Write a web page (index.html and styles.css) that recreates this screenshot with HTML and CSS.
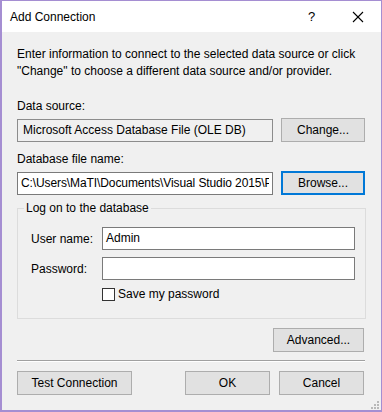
FILE: index.html
```html
<!DOCTYPE html>
<html lang="en">
<head>
  <meta charset="UTF-8">
  <title>Add Connection</title>
  <link rel="stylesheet" href="styles.css">
</head>
<body>
  <div class="window">
    <div class="titlebar">
      <span class="title">Add Connection</span>
      <span class="help">?</span>
      <span class="close">
        <svg width="12" height="12" viewBox="0 0 12 12">
          <line x1="1" y1="1" x2="11" y2="11" stroke="#000" stroke-width="1.1"></line>
          <line x1="11" y1="1" x2="1" y2="11" stroke="#000" stroke-width="1.1"></line>
        </svg>
      </span>
    </div>

    <div class="content">
      <p class="intro">Enter information to connect to the selected data source or click "Change" to choose a different data source and/or provider.</p>

      <label class="field-label">Data source:</label>
      <div class="row">
        <div class="textbox readonly">Microsoft Access Database File (OLE DB)</div>
        <button class="button">Change...</button>
      </div>

      <label class="field-label">Database file name:</label>
      <div class="row">
        <div class="textbox"><span class="path">C:\Users\MaTI\Documents\Visual Studio 2015\P</span></div>
        <button class="button focused">Browse...</button>
      </div>

      <fieldset class="group">
        <legend>Log on to the database</legend>
        <div class="login-row">
          <span class="login-label">User name:</span>
          <div class="textbox wide">Admin</div>
        </div>
        <div class="login-row">
          <span class="login-label">Password:</span>
          <div class="textbox wide"></div>
        </div>
        <div class="check-row">
          <span class="checkbox"></span>
          <span>Save my password</span>
        </div>
      </fieldset>

      <div class="advanced-row">
        <button class="button advanced">Advanced...</button>
      </div>

      <div class="separator"></div>

      <div class="footer">
        <button class="button test">Test Connection</button>
        <div class="footer-right">
          <button class="button">OK</button>
          <button class="button">Cancel</button>
        </div>
      </div>
    </div>

    <div class="grip">
      <i></i><i></i><i></i><i></i><i></i><i></i>
    </div>
  </div>
</body>
</html>
```

FILE: styles.css
```css
body {
  margin: 0;
  padding: 0;
  font-family: 'Liberation Sans', Arial, sans-serif;
  font-size: 12px;
  color: #000;
  background-color: #3b3b3b;
}
.window {
  position: relative;
  box-sizing: border-box;
  width: 382px;
  height: 412px;
  border: 1px solid #a58ed2;
  border-left-width: 2px;
  border-bottom-width: 2px;
  background-color: #f0f0f0;
  overflow: hidden;
}
.titlebar {
  display: flex;
  align-items: center;
  height: 31px;
  background-color: #fff;
  padding-left: 8px;
}
.title {
  flex: 1;
  font-size: 12px;
}
.help {
  width: 24px;
  font-size: 13px;
  margin-right: 20px;
}
.close {
  display: flex;
  align-items: center;
  margin-right: 17px;
}
.content {
  padding: 14px 16px 0 15px;
}
.intro {
  margin: 0 0 18px 0;
  line-height: 17px;
  padding-right: 6px;
}
.field-label {
  display: block;
  line-height: 16px;
  margin-bottom: 4px;
}
.row {
  display: flex;
  align-items: center;
  justify-content: space-between;
  margin-bottom: 9px;
}
.textbox {
  box-sizing: border-box;
  width: 256px;
  height: 23px;
  line-height: 21px;
  padding: 0 3px;
  border: 1px solid #7a7a7a;
  background-color: #fff;
  white-space: nowrap;
  overflow: hidden;
}
.path {
  display: block;
  overflow: hidden;
  letter-spacing: -0.1px;
}
.textbox.readonly {
  background-color: #f0f0f0;
  border-color: #8c8c8c;
  padding-left: 5px;
}
.button {
  box-sizing: border-box;
  width: 84px;
  height: 24px;
  font-family: inherit;
  font-size: 12px;
  color: #000;
  background-color: #e1e1e1;
  border: 1px solid #adadad;
  padding: 0;
}
.button.focused {
  border: 2px solid #0078d7;
}
.group {
  margin: -3px 0 0 0;
  padding: 11px 10px 14px 6px;
  border: 1px solid #dcdcdc;
  height: 118px;
  box-sizing: border-box;
}
.group legend {
  padding: 0 2px;
  margin-left: 0;
}
.login-row {
  display: flex;
  align-items: center;
  margin-bottom: 7px;
  padding-left: 7px;
}
.login-row:first-of-type {
  margin-top: 1px;
}
.login-label {
  width: 71px;
}
.textbox.wide {
  width: 253px;
  height: 23px;
}
.check-row {
  display: flex;
  align-items: center;
  gap: 3px;
  margin-left: 78px;
  margin-top: 0;
}
.checkbox {
  box-sizing: border-box;
  width: 13px;
  height: 13px;
  border: 1px solid #333;
  background-color: #fff;
}
.advanced-row {
  display: flex;
  justify-content: flex-end;
  margin-top: 9px;
  padding-right: 1px;
}
.button.advanced {
  width: 91px;
}
.separator {
  height: 1px;
  margin: 8px 0 9px 0;
  background-color: #a0a0a0;
  border-bottom: 1px solid #fff;
}
.footer {
  display: flex;
  justify-content: space-between;
}
.footer-right {
  display: flex;
  gap: 9px;
  padding-right: 1px;
}
.button.test {
  width: 115px;
}
.footer-right .button {
  width: 85px;
}
.grip {
  position: absolute;
  right: 2px;
  bottom: 1px;
  width: 9px;
  height: 9px;
}
.grip i {
  position: absolute;
  width: 2px;
  height: 2px;
  background-color: #b8b8b8;
}
.grip i:nth-child(1) { right: 0; bottom: 0; }
.grip i:nth-child(2) { right: 3px; bottom: 0; }
.grip i:nth-child(3) { right: 6px; bottom: 0; }
.grip i:nth-child(4) { right: 0; bottom: 3px; }
.grip i:nth-child(5) { right: 3px; bottom: 3px; }
.grip i:nth-child(6) { right: 0; bottom: 6px; }
```
